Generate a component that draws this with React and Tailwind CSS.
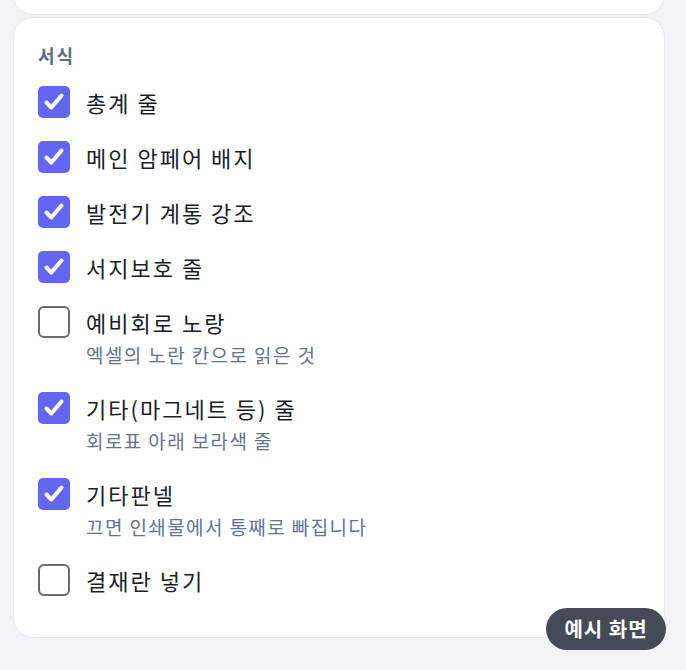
const ROWS = [
  { label: '총계 줄', checked: true },
  { label: '메인 암페어 배지', checked: true },
  { label: '발전기 계통 강조', checked: true },
  { label: '서지보호 줄', checked: true },
  { label: '예비회로 노랑', checked: false, sub: '엑셀의 노란 칸으로 읽은 것' },
  { label: '기타(마그네트 등) 줄', checked: true, sub: '회로표 아래 보라색 줄' },
  { label: '기타판넬', checked: true, sub: '끄면 인쇄물에서 통째로 빠집니다' },
  { label: '결재란 넣기', checked: false },
];

function Box({ checked }) {
  if (!checked) {
    return <span className="w-8 h-8 shrink-0 rounded-[6px] border-2 border-[#6b6b6b] bg-white" />;
  }
  return (
    <span className="w-8 h-8 shrink-0 rounded-[5px] bg-[#6366f1] flex items-center justify-center">
      <svg width="24" height="24" viewBox="0 0 24 24" fill="none">
        <path d="M4.5 12.5l4.8 5L19.5 5.5" stroke="white" strokeWidth="4" strokeLinecap="round" strokeLinejoin="round" />
      </svg>
    </span>
  );
}

export default function App() {
  return (
    <div
      className="relative min-h-[670px] bg-[#f2f2f7] pl-[13px] pr-[21px] pb-8"
      style={{ fontFamily: '"Noto Sans CJK KR", "Noto Sans", sans-serif' }}
    >
      <div className="h-[15px] overflow-hidden">
        <div className="h-[60px] -mt-[45px] rounded-[20px] bg-white border border-[#e5e5ea]" />
      </div>
      <div className="mt-[2px] rounded-[20px] bg-white border border-[#e5e5ea] px-6 pt-[25px] pb-[41px]">
        <div className="text-[18px] leading-6 font-bold tracking-[2px] text-[#5f6b80]">서식</div>
        <div className="mt-[19px] flex flex-col gap-[23px]">
          {ROWS.map(r => (
            <div key={r.label} className="flex items-start gap-4">
              <Box checked={r.checked} />
              <div className="flex flex-col">
                <span className="text-[22px] leading-8 tracking-[2px] text-[#1a1d29]">{r.label}</span>
                {r.sub && <span className="mt-[3px] text-[19px] leading-7 tracking-[1.4px] text-[#64748b]">{r.sub}</span>}
              </div>
            </div>
          ))}
        </div>
      </div>
      <div className="absolute left-[546px] top-[608px] h-[42px] w-[120px] rounded-full bg-[#454a57] flex items-center justify-center text-white text-[20px] font-bold tracking-[1px]">
        예시 화면
      </div>
    </div>
  );
}
